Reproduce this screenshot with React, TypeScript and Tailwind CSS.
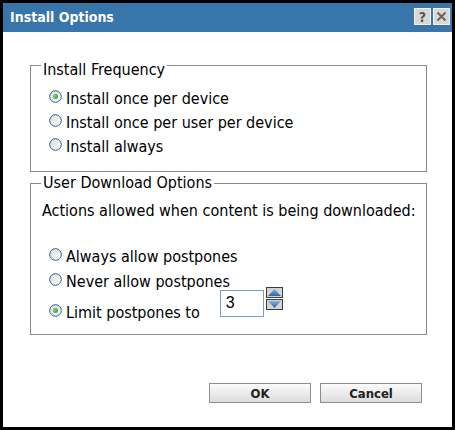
import { useState } from "react";

const ui = "font-['DejaVu_Sans_Condensed','DejaVu_Sans',sans-serif] [font-stretch:condensed]";

const Radio = ({ checked }: { checked?: boolean }) => (
    <svg width="13" height="13" viewBox="0 0 13 13" className="shrink-0 mt-[1px]">
        <defs>
            <linearGradient id="radioFill" x1="0" y1="0" x2="1" y2="1">
                <stop offset="0" stopColor="#d8d8d2" />
                <stop offset="1" stopColor="#ffffff" />
            </linearGradient>
            <radialGradient id="radioDot" cx="0.4" cy="0.4" r="0.6">
                <stop offset="0" stopColor="#7ee07e" />
                <stop offset="1" stopColor="#1f9a1f" />
            </radialGradient>
        </defs>
        <circle cx="6.5" cy="6.5" r="5.8" fill="url(#radioFill)" stroke="#2a5d8f" strokeWidth="1" />
        {checked && <circle cx="6.5" cy="6.5" r="2.4" fill="url(#radioDot)" />}
    </svg>
);

const Option = ({ label, checked }: { label: string; checked?: boolean }) => (
    <div className="flex items-start gap-[4px] leading-[20px]">
        <Radio checked={checked} />
        <span>{label}</span>
    </div>
);

const SpinArrow = ({ up }: { up?: boolean }) => (
    <svg width="17" height="11" viewBox="0 0 17 11">
        <defs>
            <linearGradient id={up ? "spinUp" : "spinDown"} x1="0" y1="0" x2="0" y2="1">
                <stop offset="0" stopColor="#7fb2e6" />
                <stop offset="1" stopColor="#2a66b0" />
            </linearGradient>
        </defs>
        <rect x="0.5" y="0.5" width="16" height="10" fill="#d6d4ce" stroke="#3c3c3c" />
        {up ? (
            <polygon points="2,9 8.5,2 15,9" fill="url(#spinUp)" />
        ) : (
            <polygon points="2,2 8.5,9 15,2" fill="url(#spinDown)" />
        )}
    </svg>
);

export default function App() {
    const [limit, setLimit] = useState("3");

    return (
        <div className={`w-[455px] h-[430px] border-[3px] border-black bg-white flex flex-col text-[16px] text-black ${ui}`}>
            {/* title bar */}
            <div className="h-[29px] shrink-0 bg-[#3775ab] flex items-start justify-between">
                <span className="pl-[7px] pt-[5px] text-white font-bold text-[14px] leading-[18px]">Install Options</span>
                <div className="flex gap-[2px] pt-[5px] pr-[2px]">
                    <div className="w-[17px] h-[17px] bg-[#dad8d2] border border-[#f2f2f2] flex items-center justify-center text-[#555] font-bold text-[14px] leading-none">?</div>
                    <div className="w-[17px] h-[17px] bg-[#dad8d2] border border-[#f2f2f2] flex items-center justify-center">
                        <svg width="11" height="11" viewBox="0 0 11 11">
                            <path d="M1.5 1.5 L9.5 9.5 M9.5 1.5 L1.5 9.5" stroke="#666" strokeWidth="2" />
                        </svg>
                    </div>
                </div>
            </div>

            <div className="flex-1 flex flex-col pl-[27px]">
                {/* Install Frequency */}
                <div className="mt-[33px] w-[397px] border border-[#8a8a84] pb-[14px]">
                    <div className="-mt-[5px] ml-[10px] px-[2px] w-fit bg-white leading-[18px]">Install Frequency</div>
                    <div className="mt-[10px] pl-[18px] flex flex-col gap-[4px]">
                        <Option label="Install once per device" checked />
                        <Option label="Install once per user per device" />
                        <Option label="Install always" />
                    </div>
                </div>

                {/* User Download Options */}
                <div className="mt-[11px] w-[397px] border border-[#8a8a84] pb-[11px]">
                    <div className="-mt-[10px] ml-[10px] px-[2px] w-fit bg-white leading-[18px]">User Download Options</div>
                    <div className="mt-[9px] pl-[11px] leading-[20px]">Actions allowed when content is being downloaded:</div>
                    <div className="mt-[26px] pl-[18px] flex flex-col">
                        <Option label="Always allow postpones" />
                        <div className="mt-[5px]">
                            <Option label="Never allow postpones" />
                        </div>
                        <div className="-mt-[5px] flex items-end">
                            <Option label="Limit postpones to" checked />
                            <div className="ml-[20px] mb-[6px] flex items-start gap-[2px]">
                                <input
                                    value={limit}
                                    onChange={(e) => setLimit(e.target.value)}
                                    className="mt-[3px] w-[44px] h-[27px] border border-[#7f9db9] pl-[5px] pt-[2px] pb-[4px] font-['Liberation_Sans',sans-serif] text-[16px] outline-none"
                                />
                                <div className="flex flex-col gap-[1px]">
                                    <SpinArrow up />
                                    <SpinArrow />
                                </div>
                            </div>
                        </div>
                    </div>
                </div>

                {/* buttons */}
                <div className="mt-[48px] pr-[30px] flex justify-end gap-[9px]">
                    <button className="w-[102px] h-[20px] border border-[#8d8d8d] bg-linear-to-b from-[#fbfbfb] to-[#dcdcdc] font-bold text-[13px] leading-none text-[#222]">OK</button>
                    <button className="w-[102px] h-[20px] border border-[#8d8d8d] bg-linear-to-b from-[#fbfbfb] to-[#dcdcdc] font-bold text-[13px] leading-none text-[#222]">Cancel</button>
                </div>
            </div>
        </div>
    );
}
